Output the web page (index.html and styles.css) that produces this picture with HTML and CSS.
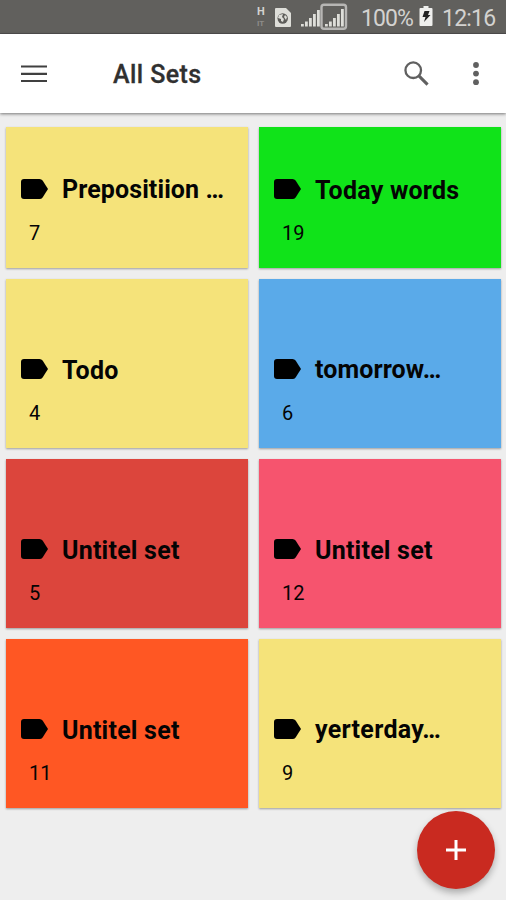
FILE: index.html
```html
<!DOCTYPE html>
<html lang="en">
<head>
<meta charset="utf-8">
<title>All Sets</title>
<link rel="stylesheet" href="styles.css">
</head>
<body>
<svg class="defs" width="0" height="0">
  <symbol id="tag" viewBox="0 0 27 20"><path d="M3 0H18.5Q20.5 0 21.6 1.6L27 10L21.6 18.4Q20.5 20 18.5 20H3Q0 20 0 17V3Q0 0 3 0Z"/></symbol>
</svg>
<div class="status">
  <div class="network"><span>H</span><span class="dim">IT</span></div>
  <svg class="sim" width="16" height="19" viewBox="0 0 16 19"><path fill="#deded9" d="M1 0H11L16 5V18Q16 19 15 19H1Q0 19 0 18V1Q0 0 1 0Z"/><circle cx="7.7" cy="10.5" r="5.2" fill="#5d5c59"/><path fill="#deded9" d="M4 7L8 6L7 9L9 11L8 14L6 13L6 11L3 10ZM10 7L12 9L11 12L9 9Z"/></svg>
  <svg class="signal" width="48" height="27" viewBox="0 0 48 27"><g fill="#deded9"><path d="M1 21h2.8v2.5H1zM5 18.5h2.8v5H5zM9 15h2.8v8.5H9zM13 11h2.8v12.5H13zM17 7h2.8v16.5H17z"/><path d="M25 21h2.8v2.5H25zM29 18.5h2.8v5H29zM33 15h2.8v8.5H33zM37 11h2.8v12.5H37zM41 6h2.8v17.5H41z"/></g><rect x="21.5" y="1.8" width="24.5" height="24" rx="2.5" fill="none" stroke="#b7b6b4" stroke-width="2.4"/></svg>
  <span class="percent">100%</span>
  <svg class="battery" width="14" height="20" viewBox="0 0 13 20"><path fill="#efefed" d="M4 0H9V2H12Q13 2 13 3V19Q13 20 12 20H1Q0 20 0 19V3Q0 2 1 2H4Z"/><path fill="#222" d="M5 5H10L8.5 9H11L4.5 16L6 11H3Z"/></svg>
  <span class="clock">12:16</span>
</div>
<header class="bar">
  <svg class="menu" width="26" height="18" viewBox="0 0 26 18"><path d="M0 1.5H26M0 8.8H26M0 16H26" stroke="#404040" stroke-width="2.2"/></svg>
  <h1>All Sets</h1>
  <svg class="search" width="25" height="25" viewBox="0 0 26 26" fill="none" stroke="#606060"><circle cx="9.6" cy="9.6" r="8.1" stroke-width="2.4"/><path d="M15.5 15.5L24.5 24.5" stroke-width="3.2"/></svg>
  <svg class="more" width="6" height="24" viewBox="0 0 6 24" fill="#606060"><circle cx="3" cy="3" r="2.9"/><circle cx="3" cy="11.6" r="2.9"/><circle cx="3" cy="20.2" r="2.9"/></svg>
</header>
<main class="grid">
  <article class="card yellow"><div class="name"><svg class="tag"><use href="#tag"/></svg><h2>Prepositiion …</h2></div><p>7</p></article>
  <article class="card green"><div class="name"><svg class="tag"><use href="#tag"/></svg><h2 class="low">Today words</h2></div><p>19</p></article>
  <article class="card yellow"><div class="name"><svg class="tag"><use href="#tag"/></svg><h2 class="low">Todo</h2></div><p>4</p></article>
  <article class="card blue"><div class="name"><svg class="tag"><use href="#tag"/></svg><h2>tomorrow…</h2></div><p>6</p></article>
  <article class="card red"><div class="name"><svg class="tag"><use href="#tag"/></svg><h2 class="low">Untitel set</h2></div><p>5</p></article>
  <article class="card pink"><div class="name"><svg class="tag"><use href="#tag"/></svg><h2 class="low">Untitel set</h2></div><p>12</p></article>
  <article class="card orange"><div class="name"><svg class="tag"><use href="#tag"/></svg><h2 class="low">Untitel set</h2></div><p>11</p></article>
  <article class="card yellow"><div class="name"><svg class="tag"><use href="#tag"/></svg><h2 class="wide">yerterday…</h2></div><p>9</p></article>
</main>
<button class="fab" aria-label="Add"><svg width="22" height="22" viewBox="0 0 22 22"><path d="M11 1V21M1 11H21" stroke="#fff" stroke-width="3"/></svg></button>
</body>
</html>
```
FILE: styles.css
```css
* { box-sizing: border-box; }
body { margin: 0; height: 900px; overflow: hidden; background: #eee; font-family: Roboto, sans-serif; color: #040404; }
.defs { display: none; }
.status { height: 34px; display: flex; align-items: flex-start; padding-left: 257px; background: #61605d; border-bottom: 1px solid #515050; color: #d3d2d0; font-size: 23px; line-height: 37px; white-space: nowrap; }
.network { width: 10px; padding-top: 5px; font-size: 11px; line-height: 13px; font-weight: 700; }
.network span { display: block; }
.network .dim { color: #8e8d8a; font-size: 8px; line-height: 11px; }
.sim { margin: 8px 0 0 8px; }
.signal { margin: 3px 0 0 9px; }
.percent { width: 58px; margin-left: 13px; letter-spacing: -.9px; }
.battery { margin-top: 6px; }
.clock { margin-left: 9px; letter-spacing: -.8px; }
.bar { height: 79px; display: flex; align-items: center; padding: 0 27px 0 21px; background: #fff; box-shadow: 0 1px 3px rgba(0,0,0,.5); }
.bar h1 { margin: 2px auto 0 66px; font-size: 25px; line-height: 30px; font-weight: 500; letter-spacing: .4px; color: #303030; -webkit-text-stroke: .3px #303030; }
.search { margin: 0 44px 1px 0; }
.more { margin-top: 1px; }
.grid { display: grid; grid-template-columns: 242px 242px; grid-template-rows: 141px repeat(3, 169px); gap: 11px; padding: 14px 5px 0 6px; }
.card { display: flex; flex-direction: column; justify-content: flex-end; padding: 0 0 24px 15px; box-shadow: 0 1px 2px rgba(0,0,0,.35); }
.name { display: flex; align-items: flex-start; height: 30px; }
.tag { width: 27px; height: 20px; margin-top: 4px; }
.card h2 { margin: 0 0 0 14px; font-size: 25px; line-height: 30px; font-weight: 700; letter-spacing: .1px; white-space: nowrap; }
.card h2.low { margin-top: 1px; letter-spacing: .22px; }
.card h2.wide { letter-spacing: .3px; }
.card p { margin: 17px 0 0 8px; font-size: 20px; line-height: 22px; }
.yellow { background: #f5e37a; }
.green { background: #10e319; }
.blue { background: #5aaae9; }
.red { background: #dc453c; }
.pink { background: #f6546e; }
.orange { background: #ff5723; }
.fab { position: absolute; left: 417px; top: 811px; width: 78px; height: 78px; display: flex; align-items: center; justify-content: center; padding: 0; border: 0; border-radius: 50%; background: #c92a20; box-shadow: 0 4px 7px rgba(0,0,0,.28); }
```
